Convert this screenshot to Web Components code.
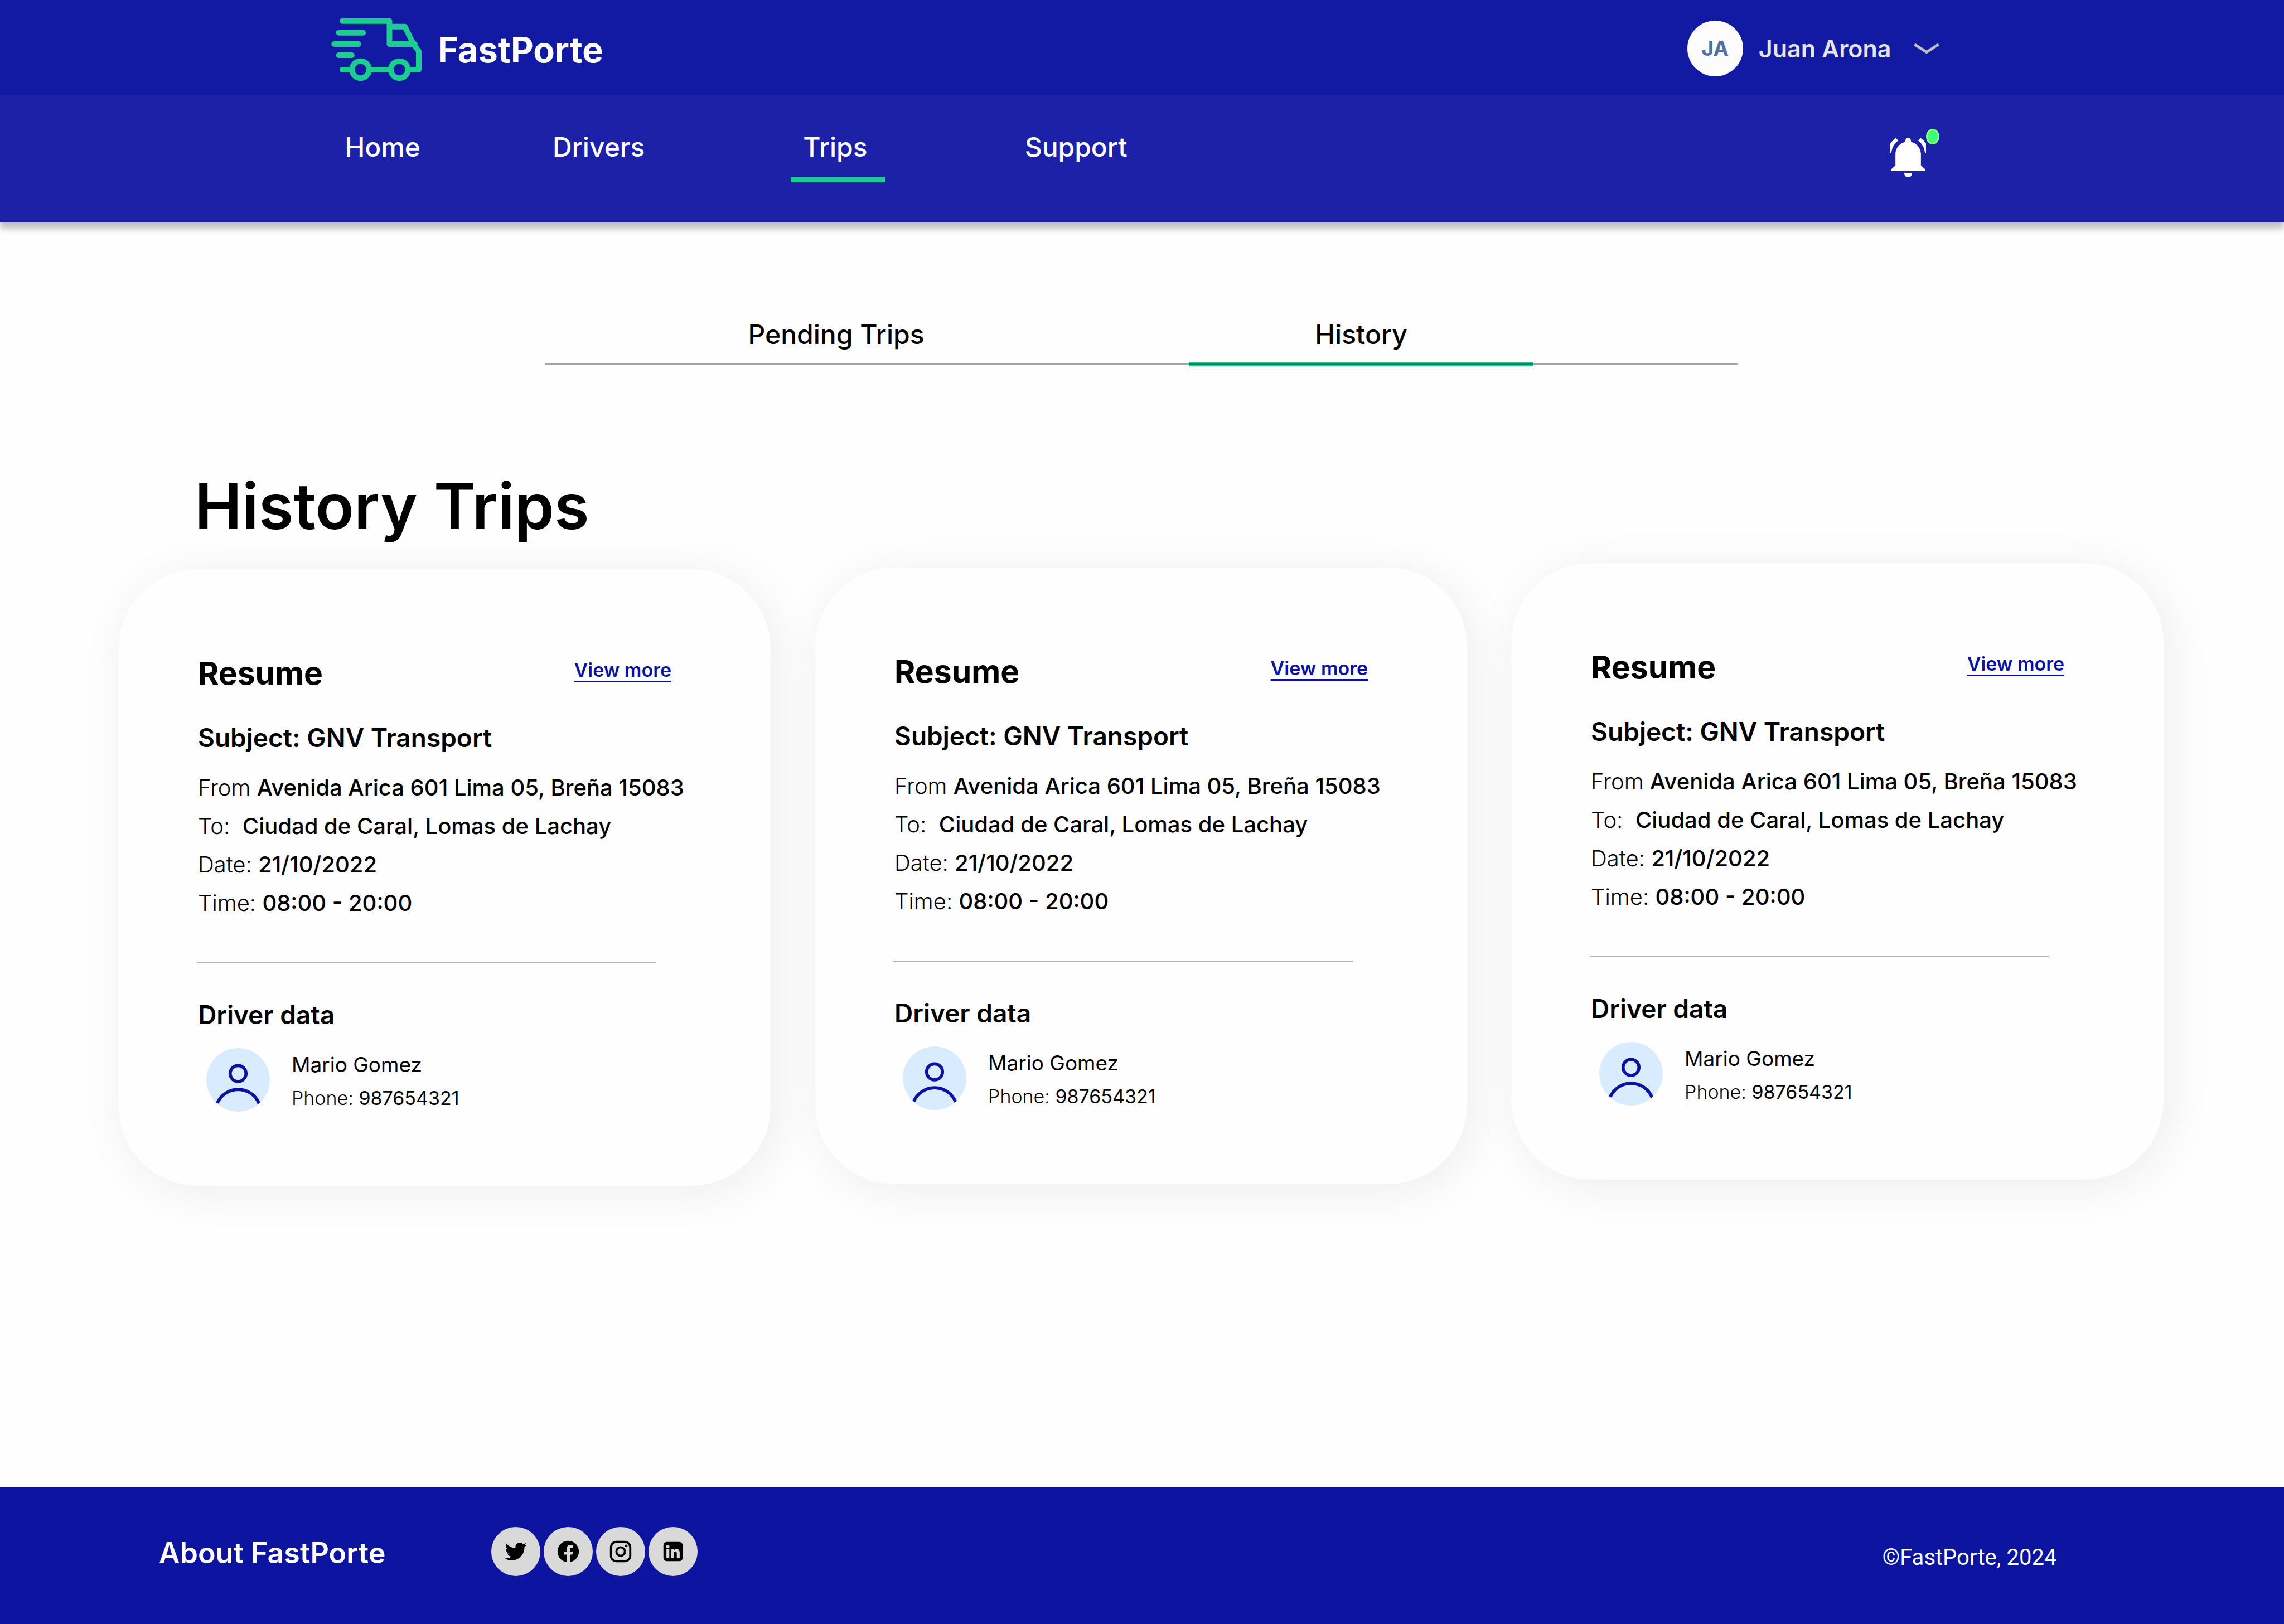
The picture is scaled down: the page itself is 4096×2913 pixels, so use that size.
<!DOCTYPE html>
<html lang="en">
<head>
<meta charset="utf-8">
<title>FastPorte – History Trips</title>
<style>
html, body { margin: 0; height: 100%; }
body { font-family: Inter, "Liberation Sans", sans-serif; background: #fefefe; color: #000; }
</style>
</head>
<body>
<fp-app></fp-app>

<template id="t-app">
<style>
:host { display: flex; flex-direction: column; min-height: 100%; }
main { flex: 1; padding: 172px 5.27% 0 5.2%; }
h1 { margin: 182px 0 0 136px; font-size: 114px; line-height: 138px; font-weight: 600; }
.cards { display: grid; grid-template-columns: repeat(3, 1fr); column-gap: 80px; align-items: start; margin-top: 33px; }
.cards > :nth-child(1) { margin-top: 11px; }
.cards > :nth-child(2) { margin-top: 8px; }
</style>
<fp-header></fp-header>
<main>
<fp-tabs></fp-tabs>
<h1>History Trips</h1>
<section class="cards">
<fp-trip-card></fp-trip-card>
<fp-trip-card></fp-trip-card>
<fp-trip-card></fp-trip-card>
</section>
</main>
<fp-footer></fp-footer>
</template>

<template id="t-header">
<style>
:host { display: block; position: relative; color: #fff; box-shadow: 0 11px 11px rgba(0,0,0,.25); }
.top { background: #121aa3; height: 171px; padding: 0 15.1% 0 14.5%; display: flex; align-items: center; justify-content: space-between; box-sizing: border-box; }
.brand { display: flex; align-items: center; gap: 29px; color: inherit; text-decoration: none; font-size: 63px; font-weight: 700; line-height: 76px; padding-top: 6px; }
.brand svg { width: 162px; height: 114px; }
.user { display: flex; align-items: center; border: 0; background: none; padding: 2px 0 0; font: 600 43px/52px Inter, "Liberation Sans", sans-serif; color: #e5e5e5; }
.avatar { width: 100px; height: 100px; border-radius: 50%; background: #fcfcfc; color: #526fa1; font-size: 37px; font-weight: 700; line-height: 100px; margin-right: 28px; }
.user svg { width: 46px; height: 20px; margin-left: 40px; }
.bar { background: #1c21a8; height: 228px; padding: 64px 15% 0 15.1%; display: flex; justify-content: space-between; box-sizing: border-box; }
nav { display: flex; align-items: flex-start; gap: 237px; }
.bell { position: relative; width: 64px; height: 71px; padding: 0; border: 0; background: none; margin: 12px 28px 0 0; }
.bell svg { display: block; width: 64px; height: 71px; }
.dot { position: absolute; left: 64px; top: -16px; width: 24px; height: 28px; border-radius: 50%; box-sizing: border-box; border: 3px solid #85ff85; background: #40ff77; }
</style>
<div class="top">
<a class="brand" href="#">
<svg viewBox="836 46 228 160" fill="none" stroke="#1dcd90" stroke-width="14" stroke-linecap="round" stroke-linejoin="round" aria-hidden="true"><path d="M864 54H983V112H1047M983 68H1022L1043 111L1057 130V176.500H1029M855 83.500H916.500M843.500 112H904.500M855 140H888M864 176.500H889M931 176.500H987"/><circle cx="910" cy="176.500" r="21.500"/><circle cx="1008" cy="176.500" r="21.500"/></svg>
<span>FastPorte</span></a>
<button class="user" type="button"><span class="avatar">JA</span><span>Juan Arona</span>
<svg viewBox="0 0 46 20" fill="none" stroke="#bfbfbf" stroke-width="5" aria-hidden="true"><path d="M1.500 2.500L23 16.500L44.500 2.500"/></svg></button>
</div>
<div class="bar">
<nav>
<fp-nav-item label="Home"></fp-nav-item>
<fp-nav-item label="Drivers"></fp-nav-item>
<fp-nav-item label="Trips" active></fp-nav-item>
<fp-nav-item label="Support"></fp-nav-item>
</nav>
<button class="bell" type="button" aria-label="Notifications">
<svg viewBox="0 0 90 100" fill="#fff" aria-hidden="true"><path d="M37.800 10.700V8a7.100 8 0 0 1 14.200 0v2.700C68 14.500 77.200 27 77.200 42V70L87.800 79.600V84.600H2.500V79.600L12.800 70V42C12.800 27 22 14.500 37.800 10.700zM35 89.200H55C55 96 51 100 45 100S35 96 35 89.200zM13.800.8L20 7.300C9 15 3.500 27 2.500 39.400H0V14.500Q5 6.500 13.800.8zM76.200.8L70 7.300C81 15 86.500 27 87.500 39.400H90V14.500Q85 6.500 76.200.8z"/></svg>
<span class="dot"></span></button>
</div>
</template>

<template id="t-nav-item">
<style>
:host { display: block; }
:host([active]) { margin: 0 13px 0 25px; }
a { display: block; color: #fff; text-decoration: none; font-size: 48px; font-weight: 500; line-height: 58px; padding-bottom: 25px; border-bottom: 9px solid transparent; }
:host([active]) a { border-color: #1dcd90; padding-left: 22px; padding-right: 32px; }
</style>
<a href="#"></a>
</template>

<template id="t-tabs">
<style>
:host { display: flex; justify-content: center; }
.list { position: relative; display: grid; grid-template-columns: 1045px 618px; column-gap: 110px; padding-right: 366px; }
.list::after { content: ""; position: absolute; left: 0; right: 0; bottom: 3px; height: 2px; background: rgba(0,0,0,.35); }
button { border: 0; border-bottom: 8px solid transparent; background: none; padding: 0 0 20px; font: 500 48px/58px Inter, "Liberation Sans", sans-serif; color: #000; text-align: center; }
button[aria-selected="true"] { border-color: #1dcd90; }
</style>
<div class="list" role="tablist"><button role="tab" aria-selected="false">Pending Trips</button><button role="tab" aria-selected="true">History</button></div>
</template>

<template id="t-card">
<style>
:host { display: block; box-sizing: border-box; border-radius: 142px; background: #fefefe; padding: 152px 140px 127px; box-shadow: 11px 11px 85px rgba(0,0,0,.07); }
.head { display: flex; justify-content: space-between; align-items: flex-start; padding: 0 38px 0 2px; }
h2 { margin: 0; font-size: 57px; line-height: 70px; font-weight: 700; }
a { color: #0c12a0; font-size: 34px; line-height: 42px; font-weight: 600; margin-top: 8px; text-decoration: underline; text-decoration-thickness: 3px; text-underline-offset: 7px; }
h3 { margin: 0 0 0 2px; font-size: 46px; line-height: 56px; font-weight: 600; }
.subject { margin-top: 52px; }
p { margin: 0; white-space: pre; font-weight: 300; }
.facts { margin: 27px 0 0 2px; font-size: 40px; line-height: 69px; }
.facts b { font-weight: 500; }
hr { border: 0; border-top: 2px solid #b4b4b4; margin: 72px 65px 0 0; }
.driver { margin-top: 64px; }
.person { display: flex; align-items: flex-start; margin: 32px 0 0 17px; gap: 39px; }
.person svg { width: 114px; height: 114px; }
.name { font-size: 37px; line-height: 60px; font-weight: 400; }
.phone { font-size: 34px; line-height: 60px; }
.phone b { font-weight: 400; }
</style>
<div class="head"><h2>Resume</h2><a href="#">View more</a></div>
<h3 class="subject">Subject: GNV Transport</h3>
<div class="facts">
<p>From <b>Avenida Arica 601 Lima 05, Breña 15083</b></p>
<p>To:  <b>Ciudad de Caral, Lomas de Lachay</b></p>
<p>Date: <b>21/10/2022</b></p>
<p>Time: <b>08:00 - 20:00</b></p>
</div>
<hr>
<h3 class="driver">Driver data</h3>
<div class="person">
<svg viewBox="0 0 160 160" aria-hidden="true"><clipPath id="c"><circle cx="80" cy="80" r="80"/></clipPath><g clip-path="url(#c)"><circle cx="80" cy="80" r="80" fill="#d9ebff"/><g fill="none" stroke="#0c12a0" stroke-width="8"><circle cx="80" cy="64" r="20"/><circle cx="80" cy="161" r="57" stroke-dasharray="134 300" stroke-dashoffset="-202"/></g></g></svg>
<div><p class="name">Mario Gomez</p><p class="phone">Phone: <b>987654321</b></p></div>
</div>
</template>

<template id="t-footer">
<style>
:host { display: flex; align-items: center; height: 245px; box-sizing: border-box; background: #0c14a0; color: #fff; padding: 0 9.95% 10px 6.95%; }
h2 { margin: 0; font-size: 52px; line-height: 62px; font-weight: 600; }
ul { display: flex; gap: 6px; list-style: none; margin: 0 0 0 190px; padding: 0 0 5px; }
li a { display: flex; align-items: center; justify-content: center; width: 88px; height: 88px; border-radius: 50%; background: #d9d9d9; }
svg { width: 46px; height: 46px; }
small { margin-left: auto; padding-top: 17px; font: 400 40px/48px Roboto, sans-serif; }
</style>
<h2>About FastPorte</h2>
<ul>
<li><a href="#" aria-label="Twitter"><svg viewBox="0 0 24 24"><path d="M22.162 5.656a8.384 8.384 0 0 1-2.402.658A4.196 4.196 0 0 0 21.600 4c-.82.488-1.719.83-2.656 1.015a4.182 4.182 0 0 0-7.126 3.814 11.874 11.874 0 0 1-8.620-4.370 4.168 4.168 0 0 0-.566 2.103c0 1.450.738 2.731 1.860 3.481a4.168 4.168 0 0 1-1.894-.523v.052a4.185 4.185 0 0 0 3.355 4.101 4.210 4.210 0 0 1-1.890.072A4.185 4.185 0 0 0 7.970 16.650a8.394 8.394 0 0 1-6.191 1.732 11.830 11.830 0 0 0 6.410 1.880c7.693 0 11.900-6.373 11.900-11.900 0-.18-.005-.362-.013-.54a8.496 8.496 0 0 0 2.087-2.165z"/></svg></a></li>
<li><a href="#" aria-label="Facebook"><svg viewBox="0 0 24 24"><path d="M12 2C6.477 2 2 6.477 2 12c0 4.991 3.657 9.128 8.438 9.879V14.890h-2.540V12h2.540V9.797c0-2.506 1.492-3.890 3.777-3.890 1.094 0 2.238.195 2.238.195v2.460h-1.260c-1.243 0-1.630.771-1.630 1.562V12h2.773l-.443 2.890h-2.330v6.989C18.343 21.129 22 16.990 22 12c0-5.523-4.477-10-10-10z"/></svg></a></li>
<li><a href="#" aria-label="Instagram"><svg viewBox="0 0 24 24" fill="none" stroke="#000" stroke-width="2"><rect x="3" y="3" width="18" height="18" rx="5"/><circle cx="12" cy="12" r="4"/><circle cx="17.250" cy="6.750" r="1.250" fill="#000" stroke="none"/></svg></a></li>
<li><a href="#" aria-label="LinkedIn"><svg viewBox="0 0 24 24"><path fill-rule="evenodd" d="M6 3H18a3 3 0 0 1 3 3V18a3 3 0 0 1-3 3H6a3 3 0 0 1-3-3V6a3 3 0 0 1 3-3zM5.800 9.900V18.300H8.500V9.900zM7.150 5.900A1.500 1.500 0 1 0 7.150 8.900A1.500 1.500 0 1 0 7.150 5.900zM9.900 9.900V18.300H12.600V13.600C12.600 11.300 15.500 11.200 15.500 13.600V18.300H18.200V12.900C18.200 9 14 8.900 12.600 10.900V9.900z"/></svg></a></li>
</ul>
<small>©FastPorte, 2024</small>
</template>

<script>
class FpElement extends HTMLElement {
  constructor() {
    super();
    this.attachShadow({ mode: "open" }).append(
      document.getElementById(this.constructor.template).content.cloneNode(true));
  }
}
class FpNavItem extends FpElement {
  static template = "t-nav-item";
  connectedCallback() {
    this.shadowRoot.querySelector("a").textContent = this.getAttribute("label");
  }
}
customElements.define("fp-nav-item", FpNavItem);
customElements.define("fp-header", class extends FpElement { static template = "t-header"; });
customElements.define("fp-tabs", class extends FpElement { static template = "t-tabs"; });
customElements.define("fp-trip-card", class extends FpElement { static template = "t-card"; });
customElements.define("fp-footer", class extends FpElement { static template = "t-footer"; });
customElements.define("fp-app", class extends FpElement { static template = "t-app"; });
</script>
</body>
</html>
